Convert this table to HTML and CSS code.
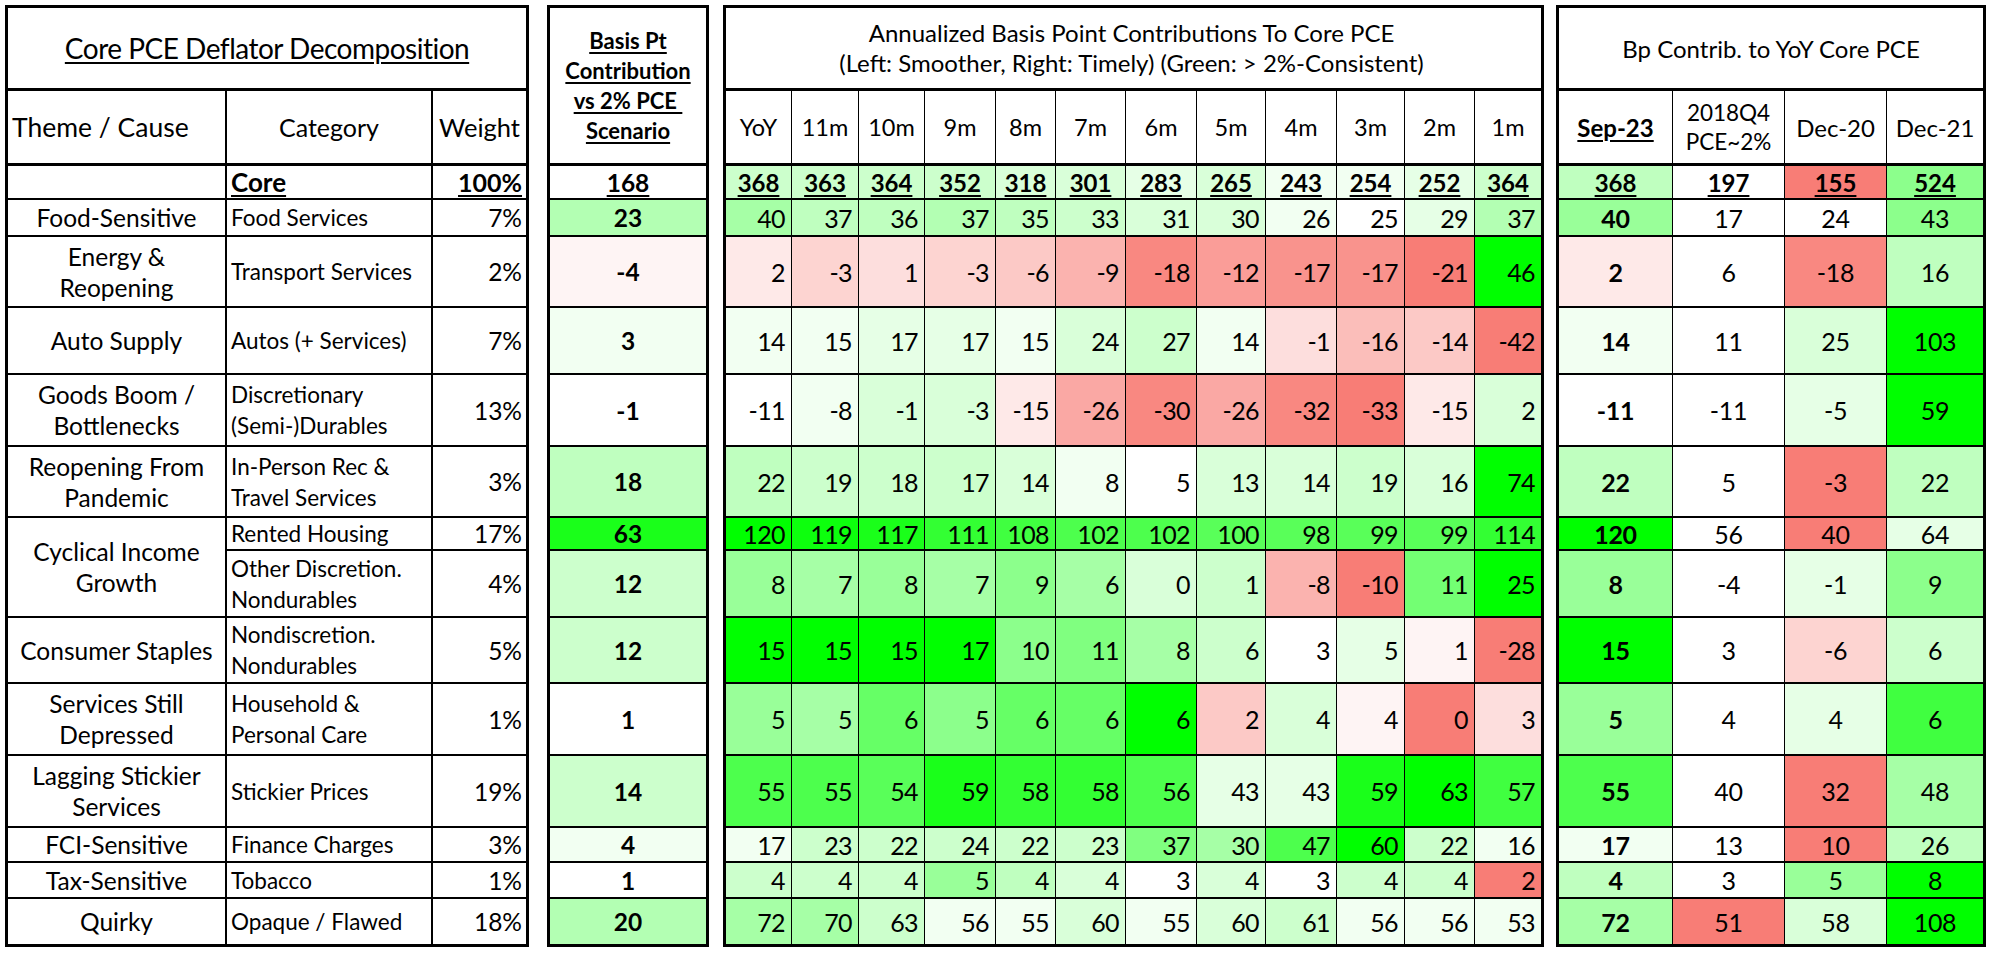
FILE: index.html
```html
<!DOCTYPE html>
<html>
<head>
<meta charset="utf-8">
<title>Core PCE Deflator Decomposition</title>
<link rel="stylesheet" href="styles.css">
</head>
<body>
<div class="sheet">

<table class="blk b1">
<colgroup><col class="c-theme"><col class="c-cat"><col class="c-wt"></colgroup>
<tr class="r-title"><td colspan="3" class="hd title"><span class="ul">Core PCE Deflator Decomposition</span></td></tr>
<tr class="r-head"><td class="hd h-theme">Theme / Cause</td><td class="hd h-cat">Category</td><td class="hd h-wt">Weight</td></tr>
<tr class="r-core"><td></td><td class="cat core-lbl"><span class="ul">Core</span></td><td class="wt core-wt"><span class="ul">100%</span></td></tr>
<tr class="r-food"><td class="theme">Food-Sensitive</td><td class="cat">Food Services</td><td class="wt">7%</td></tr>
<tr class="r-energy"><td class="theme">Energy &amp;<br>Reopening</td><td class="cat">Transport Services</td><td class="wt">2%</td></tr>
<tr class="r-auto"><td class="theme">Auto Supply</td><td class="cat">Autos (+ Services)</td><td class="wt">7%</td></tr>
<tr class="r-goods"><td class="theme">Goods Boom /<br>Bottlenecks</td><td class="cat">Discretionary<br>(Semi-)Durables</td><td class="wt">13%</td></tr>
<tr class="r-reop"><td class="theme">Reopening From<br>Pandemic</td><td class="cat">In-Person Rec &amp;<br>Travel Services</td><td class="wt">3%</td></tr>
<tr class="r-rent"><td class="theme" rowspan="2">Cyclical Income<br>Growth</td><td class="cat">Rented Housing</td><td class="wt">17%</td></tr>
<tr class="r-other"><td class="cat">Other Discretion.<br>Nondurables</td><td class="wt">4%</td></tr>
<tr class="r-cons"><td class="theme">Consumer Staples</td><td class="cat">Nondiscretion.<br>Nondurables</td><td class="wt">5%</td></tr>
<tr class="r-serv"><td class="theme">Services Still<br>Depressed</td><td class="cat">Household &amp;<br>Personal Care</td><td class="wt">1%</td></tr>
<tr class="r-lag"><td class="theme">Lagging Stickier<br>Services</td><td class="cat">Stickier Prices</td><td class="wt">19%</td></tr>
<tr class="r-fci"><td class="theme">FCI-Sensitive</td><td class="cat">Finance Charges</td><td class="wt">3%</td></tr>
<tr class="r-tax"><td class="theme">Tax-Sensitive</td><td class="cat">Tobacco</td><td class="wt">1%</td></tr>
<tr class="r-quirk"><td class="theme">Quirky</td><td class="cat">Opaque / Flawed</td><td class="wt">18%</td></tr>
</table>

<table class="blk b2">
<colgroup><col class="c-bp"></colgroup>
<tr class="r-title"><td rowspan="2" class="hd bp-head"><span class="ul">Basis Pt<br>Contribution<br>vs 2% PCE&nbsp;<br>Scenario</span></td></tr>
<tr class="r-head"></tr>
<tr class="r-core core"><td class="w"><span class="ul">168</span></td></tr>
<tr class="r-food"><td class="g30">23</td></tr>
<tr class="r-energy"><td class="r5">-4</td></tr>
<tr class="r-auto"><td class="g5">3</td></tr>
<tr class="r-goods"><td class="w">-1</td></tr>
<tr class="r-reop"><td class="g25">18</td></tr>
<tr class="r-rent"><td class="g90">63</td></tr>
<tr class="r-other"><td class="g20">12</td></tr>
<tr class="r-cons"><td class="g20">12</td></tr>
<tr class="r-serv"><td class="w">1</td></tr>
<tr class="r-lag"><td class="g20">14</td></tr>
<tr class="r-fci"><td class="g5">4</td></tr>
<tr class="r-tax"><td class="w">1</td></tr>
<tr class="r-quirk"><td class="g30">20</td></tr>
</table>

<table class="blk b3">
<colgroup>
<col class="m1"><col class="m2"><col class="m3"><col class="m4"><col class="m5"><col class="m6">
<col class="m7"><col class="m8"><col class="m9"><col class="m10"><col class="m11"><col class="m12">
</colgroup>
<tr class="r-title"><td colspan="12" class="hd ann-title">Annualized Basis Point Contributions To Core PCE<br>(Left: Smoother, Right: Timely) (Green: &gt; 2%-Consistent)</td></tr>
<tr class="r-head"><td class="hd ch">YoY</td><td class="hd ch">11m</td><td class="hd ch">10m</td><td class="hd ch">9m</td><td class="hd ch">8m</td><td class="hd ch">7m</td><td class="hd ch">6m</td><td class="hd ch">5m</td><td class="hd ch">4m</td><td class="hd ch">3m</td><td class="hd ch">2m</td><td class="hd ch">1m</td></tr>
<tr class="r-core core"><td class="g20"><span class="ul">368</span></td><td class="g20"><span class="ul">363</span></td><td class="g20"><span class="ul">364</span></td><td class="g20"><span class="ul">352</span></td><td class="g15"><span class="ul">318</span></td><td class="g15"><span class="ul">301</span></td><td class="g10"><span class="ul">283</span></td><td class="g15"><span class="ul">265</span></td><td class="g5"><span class="ul">243</span></td><td class="g5"><span class="ul">254</span></td><td class="g10"><span class="ul">252</span></td><td class="g20"><span class="ul">364</span></td></tr>
<tr class="r-food"><td class="g35">40</td><td class="g25">37</td><td class="g25">36</td><td class="g30">37</td><td class="g25">35</td><td class="g20">33</td><td class="g15">31</td><td class="g15">30</td><td class="g5">26</td><td class="w">25</td><td class="g10">29</td><td class="g30">37</td></tr>
<tr class="r-energy"><td class="r10">2</td><td class="r20">-3</td><td class="r15">1</td><td class="r20">-3</td><td class="r25">-6</td><td class="r35">-9</td><td class="r55">-18</td><td class="r45">-12</td><td class="r50">-17</td><td class="r50">-17</td><td class="r60">-21</td><td class="g100">46</td></tr>
<tr class="r-auto"><td class="g5">14</td><td class="g5">15</td><td class="g10">17</td><td class="g10">17</td><td class="g5">15</td><td class="g15">24</td><td class="g20">27</td><td class="g5">14</td><td class="r15">-1</td><td class="r30">-16</td><td class="r25">-14</td><td class="r60">-42</td></tr>
<tr class="r-goods"><td class="w">-11</td><td class="g5">-8</td><td class="g15">-1</td><td class="g15">-3</td><td class="r10">-15</td><td class="r40">-26</td><td class="r55">-30</td><td class="r40">-26</td><td class="r55">-32</td><td class="r60">-33</td><td class="r10">-15</td><td class="g15">2</td></tr>
<tr class="r-reop"><td class="g25">22</td><td class="g20">19</td><td class="g20">18</td><td class="g20">17</td><td class="g15">14</td><td class="g5">8</td><td class="w">5</td><td class="g15">13</td><td class="g15">14</td><td class="g20">19</td><td class="g15">16</td><td class="g100">74</td></tr>
<tr class="r-rent"><td class="g100">120</td><td class="g95">119</td><td class="g90">117</td><td class="g80">111</td><td class="g75">108</td><td class="g70">102</td><td class="g70">102</td><td class="g65">100</td><td class="g65">98</td><td class="g65">99</td><td class="g65">99</td><td class="g80">114</td></tr>
<tr class="r-other"><td class="g40">8</td><td class="g35">7</td><td class="g40">8</td><td class="g35">7</td><td class="g45">9</td><td class="g35">6</td><td class="g15">0</td><td class="g20">1</td><td class="r35">-8</td><td class="r60">-10</td><td class="g55">11</td><td class="g100">25</td></tr>
<tr class="r-cons"><td class="g100">15</td><td class="g100">15</td><td class="g100">15</td><td class="g100">17</td><td class="g45">10</td><td class="g50">11</td><td class="g35">8</td><td class="g20">6</td><td class="w">3</td><td class="g10">5</td><td class="r5">1</td><td class="r60">-28</td></tr>
<tr class="r-serv"><td class="g40">5</td><td class="g35">5</td><td class="g60">6</td><td class="g45">5</td><td class="g60">6</td><td class="g60">6</td><td class="g100">6</td><td class="r25">2</td><td class="g15">4</td><td class="r5">4</td><td class="r60">0</td><td class="r15">3</td></tr>
<tr class="r-lag"><td class="g70">55</td><td class="g70">55</td><td class="g65">54</td><td class="g90">59</td><td class="g80">58</td><td class="g80">58</td><td class="g70">56</td><td class="g10">43</td><td class="g10">43</td><td class="g90">59</td><td class="g100">63</td><td class="g75">57</td></tr>
<tr class="r-fci"><td class="g5">17</td><td class="g20">23</td><td class="g20">22</td><td class="g20">24</td><td class="g20">22</td><td class="g20">23</td><td class="g50">37</td><td class="g35">30</td><td class="g70">47</td><td class="g100">60</td><td class="g20">22</td><td class="g5">16</td></tr>
<tr class="r-tax"><td class="g20">4</td><td class="g20">4</td><td class="g20">4</td><td class="g40">5</td><td class="g25">4</td><td class="g15">4</td><td class="w">3</td><td class="g15">4</td><td class="w">3</td><td class="g20">4</td><td class="g20">4</td><td class="r60">2</td></tr>
<tr class="r-quirk"><td class="g35">72</td><td class="g35">70</td><td class="g20">63</td><td class="g5">56</td><td class="g5">55</td><td class="g15">60</td><td class="g5">55</td><td class="g15">60</td><td class="g20">61</td><td class="g5">56</td><td class="g5">56</td><td class="g5">53</td></tr>
</table>

<table class="blk b4">
<colgroup><col class="y1"><col class="y2"><col class="y3"><col class="y4"></colgroup>
<tr class="r-title"><td colspan="4" class="hd yoy-title">Bp Contrib. to YoY Core PCE</td></tr>
<tr class="r-head"><td class="hd ch sep-head"><span class="ul">Sep-23</span></td><td class="hd ch two">2018Q4<br>PCE~2%</td><td class="hd ch">Dec-20</td><td class="hd ch">Dec-21</td></tr>
<tr class="r-core core"><td class="g25"><span class="ul">368</span></td><td class="w"><span class="ul">197</span></td><td class="r60"><span class="ul">155</span></td><td class="g45"><span class="ul">524</span></td></tr>
<tr class="r-food"><td class="g40 sep">40</td><td class="w">17</td><td class="w">24</td><td class="g45">43</td></tr>
<tr class="r-energy"><td class="r10 sep">2</td><td class="w">6</td><td class="r55">-18</td><td class="g25">16</td></tr>
<tr class="r-auto"><td class="g5 sep">14</td><td class="w">11</td><td class="g15">25</td><td class="g100">103</td></tr>
<tr class="r-goods"><td class="w sep">-11</td><td class="w">-11</td><td class="g10">-5</td><td class="g100">59</td></tr>
<tr class="r-reop"><td class="g25 sep">22</td><td class="w">5</td><td class="r60">-3</td><td class="g25">22</td></tr>
<tr class="r-rent"><td class="g100 sep">120</td><td class="w">56</td><td class="r60">40</td><td class="g10">64</td></tr>
<tr class="r-other"><td class="g40 sep">8</td><td class="w">-4</td><td class="g10">-1</td><td class="g45">9</td></tr>
<tr class="r-cons"><td class="g100 sep">15</td><td class="w">3</td><td class="r20">-6</td><td class="g20">6</td></tr>
<tr class="r-serv"><td class="g40 sep">5</td><td class="w">4</td><td class="g10">4</td><td class="g75">6</td></tr>
<tr class="r-lag"><td class="g70 sep">55</td><td class="w">40</td><td class="r60">32</td><td class="g35">48</td></tr>
<tr class="r-fci"><td class="g5 sep">17</td><td class="w">13</td><td class="r60">10</td><td class="g25">26</td></tr>
<tr class="r-tax"><td class="g25 sep">4</td><td class="w">3</td><td class="g40">5</td><td class="g100">8</td></tr>
<tr class="r-quirk"><td class="g35 sep">72</td><td class="r60">51</td><td class="g15">58</td><td class="g100">108</td></tr>
</table>

</div>
</body>
</html>
```

FILE: styles.css
```css
* { box-sizing: border-box; }
html, body { margin: 0; padding: 0; background: #fff; }
body { font-family: Lato, "Liberation Sans", sans-serif; color: #000; }

.sheet { display: flex; align-items: flex-start; padding: 5px 0 0 5px; }

.blk { border-collapse: separate; border-spacing: 0; table-layout: fixed; border: 3px solid #000; background: #fff; }
.blk td { padding: 0 4px; border-bottom: 2px solid #000; vertical-align: middle; white-space: nowrap; overflow: hidden; }
.blk tr:last-child td { border-bottom: 0; }
.blk td.hd { border-bottom: 3px solid #000; }

.ul { text-decoration: underline; text-decoration-thickness: 2px; text-underline-offset: 3px; }

/* row heights (border-box, include bottom rule) */
.r-title { height: 83px; }
.r-head { height: 75px; }
.r-core { height: 34px; }
.r-food { height: 37px; }
.r-energy { height: 71px; }
.r-auto { height: 67px; }
.r-goods { height: 72px; }
.r-reop { height: 71px; }
.r-rent { height: 33px; }
.r-other { height: 67px; }
.r-cons { height: 66px; }
.r-serv { height: 72px; }
.r-lag { height: 72px; }
.r-fci { height: 35px; }
.r-tax { height: 36px; }
.r-quirk { height: 45px; }

/* block 1 */
.b1 { width: 524px; }
.b1 td:not(:last-child) { border-right: 2px solid #000; }
.c-theme { width: 219px; }
.c-cat { width: 206px; }
.c-wt { width: 93px; }
.title { font-size: 28px; letter-spacing: -0.5px; text-align: center; }
.h-theme { font-size: 26.5px; text-align: left; padding-left: 6px; }
.h-cat { font-size: 25px; text-align: center; }
.h-wt { font-size: 25.5px; text-align: center; padding: 0 2px; }
.theme { font-size: 24.5px; line-height: 31px; text-align: center; padding: 0 2px; }
.cat { font-size: 22.5px; line-height: 31px; text-align: left; padding-left: 4px; }
.wt { font-size: 24.5px; text-align: right; padding-right: 3px; }
.core-lbl { font-size: 26px; font-weight: 700; }
.core-wt { font-size: 25px; font-weight: 700; }

/* block 2 */
.b2 { width: 162px; margin-left: 18px; }
.c-bp { width: 156px; }
.b2 td { font-size: 24.5px; font-weight: 700; text-align: center; }
.b2 td.bp-head { font-size: 22px; line-height: 30px; }

/* block 3 */
.b3 { width: 821px; margin-left: 14px; }
.b3 td:not(:last-child) { border-right: 1px solid #000; }
.m1 { width: 66px; } .m2 { width: 67px; } .m3 { width: 66px; } .m4 { width: 71px; }
.m5 { width: 60px; } .m6 { width: 70px; } .m7 { width: 71px; } .m8 { width: 69px; }
.m9 { width: 71px; } .m10 { width: 68px; } .m11 { width: 70px; } .m12 { width: 66px; }
.b3 td { font-size: 25px; letter-spacing: -0.6px; text-align: right; padding: 0 6px 0 2px; }
.b3 td.ann-title { font-size: 24px; letter-spacing: 0; line-height: 30px; text-align: center; }
.b3 td.ch { font-size: 23.5px; letter-spacing: 0; text-align: center; padding: 0 2px; }
.b3 .core td { font-size: 24px; letter-spacing: 0; font-weight: 700; text-align: center; padding: 0 2px; }

/* block 4 */
.b4 { width: 430px; margin-left: 12px; }
.b4 td:not(:last-child) { border-right: 1px solid #000; }
.y1 { width: 114px; } .y2 { width: 112px; } .y3 { width: 102px; } .y4 { width: 96px; }
.b4 td { font-size: 25px; letter-spacing: -0.3px; text-align: center; padding: 0 2px; }
.b4 td.yoy-title { font-size: 24px; letter-spacing: 0; }
.b4 td.ch { font-size: 24px; letter-spacing: 0; }
.b4 td.two { font-size: 22.5px; line-height: 29px; }
.b4 td.sep-head { font-weight: 700; }
.b4 .core td { font-size: 24px; font-weight: 700; letter-spacing: 0; }
.b4 td.sep { font-weight: 700; }

/* heat-map fills */
.w { background: #fff; }
.g5 { background: #F2FFF2; }
.g10 { background: #E6FFE6; }
.g15 { background: #D9FFD9; }
.g20 { background: #CCFFCC; }
.g25 { background: #BFFFBF; }
.g30 { background: #B3FFB3; }
.g35 { background: #A6FFA6; }
.g40 { background: #99FF99; }
.g45 { background: #8CFF8C; }
.g50 { background: #80FF80; }
.g55 { background: #73FF73; }
.g60 { background: #66FF66; }
.g65 { background: #59FF59; }
.g70 { background: #4DFF4D; }
.g75 { background: #40FF40; }
.g80 { background: #33FF33; }
.g85 { background: #26FF26; }
.g90 { background: #1AFF1A; }
.g95 { background: #0DFF0D; }
.g100 { background: #00FF00; }
.r5 { background: #FEF4F4; }
.r10 { background: #FEE9E8; }
.r15 { background: #FDDEDD; }
.r20 { background: #FDD4D1; }
.r25 { background: #FCC9C6; }
.r30 { background: #FBBEBA; }
.r35 { background: #FBB3AF; }
.r40 { background: #FAA8A4; }
.r45 { background: #FA9D98; }
.r50 { background: #F9938D; }
.r55 { background: #F98881; }
.r60 { background: #F87D76; }
```
